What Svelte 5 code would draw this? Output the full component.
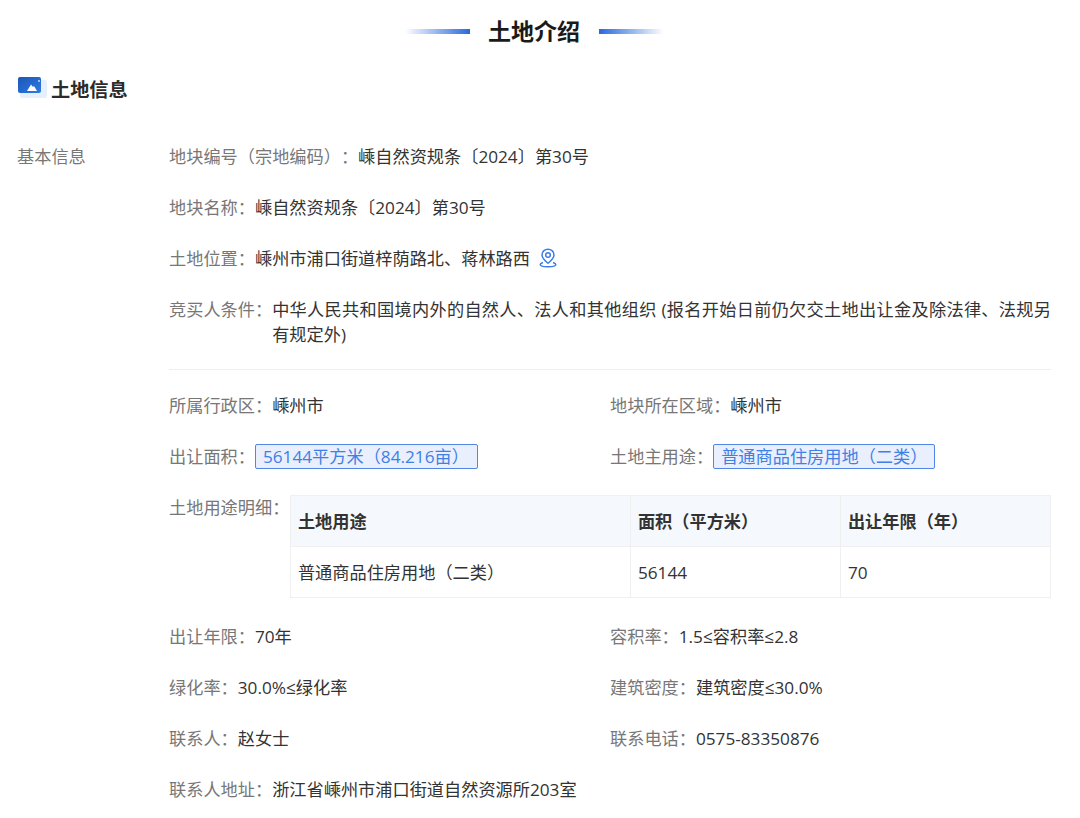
<script>
	const basics = [
		{ label: '地块编号（宗地编码）：', value: '嵊自然资规条〔2024〕第30号' },
		{ label: '地块名称：', value: '嵊自然资规条〔2024〕第30号' }
	];
	const uses = [{ name: '普通商品住房用地（二类）', area: '56144', years: '70' }];
	const footer = [
		['出让年限：', '70年', '容积率：', '1.5≤容积率≤2.8'],
		['绿化率：', '30.0%≤绿化率', '建筑密度：', '建筑密度≤30.0%'],
		['联系人：', '赵女士', '联系电话：', '0575-83350876']
	];
</script>

<div class="page">
	<header class="title">
		<span class="rule left"></span>
		<h1>土地介绍</h1>
		<span class="rule right"></span>
	</header>

	<h2 class="section">
		<svg class="section-icon" width="26" height="24" viewBox="0 0 26 24" aria-hidden="true">
			<defs>
				<linearGradient id="card" x1="0" y1="0" x2="1" y2="1">
					<stop offset="0" stop-color="#1b57b8" />
					<stop offset="1" stop-color="#2f7ae0" />
				</linearGradient>
			</defs>
			<rect x="2" y="3" width="27" height="18" rx="2" fill="#e6f0fd" />
			<rect x="0" y="0" width="23" height="16" rx="2" fill="url(#card)" />
			<path d="M9 14 L13 7.500 L15 10 L16 9 L19 14 Z" fill="#fff" />
			<circle cx="21" cy="4" r="1" fill="#bcd6fa" />
		</svg>
		<span>土地信息</span>
	</h2>

	<div class="group">
		<div class="group-name">基本信息</div>
		<div class="group-body">
			{#each basics as row}
				<div class="row"><span class="k">{row.label}</span><span class="v">{row.value}</span></div>
			{/each}
			<div class="row">
				<span class="k">土地位置：</span><span class="v">嵊州市浦口街道梓荫路北、蒋林路西</span>
				<svg class="pin" width="18" height="20" viewBox="0 0 18 20" fill="none" stroke="#3b7de8" stroke-width="1.5" aria-hidden="true">
					<path d="M9 1.200c-3.500 0-6 2.600-6 5.800 0 3.400 3 5.700 6 8.300 3-2.600 6-4.900 6-8.300 0-3.200-2.500-5.800-6-5.800z" />
					<circle cx="9" cy="7" r="2.300" />
					<path d="M4 14.500c-1.700.6-2.800 1.300-2.800 2 0 1.300 3.400 2.300 7.800 2.300s7.800-1 7.800-2.300c0-.7-1.100-1.400-2.800-2" />
				</svg>
			</div>
			<div class="row top">
				<span class="k">竞买人条件：</span>
				<span class="v wrap">中华人民共和国境内外的自然人、法人和其他组织 (报名开始日前仍欠交土地出让金及除法律、法规另有规定外)</span>
			</div>

			<div class="divider"></div>

			<div class="cols">
				<div class="row"><span class="k">所属行政区：</span><span class="v">嵊州市</span></div>
				<div class="row"><span class="k">地块所在区域：</span><span class="v">嵊州市</span></div>
			</div>
			<div class="cols">
				<div class="row"><span class="k">出让面积：</span><span class="tag wide">56144平方米（84.216亩）</span></div>
				<div class="row"><span class="k">土地主用途：</span><span class="tag">普通商品住房用地（二类）</span></div>
			</div>

			<div class="row top usage">
				<span class="k">土地用途明细：</span>
				<table>
					<thead>
						<tr><th class="c1">土地用途</th><th class="c2">面积（平方米）</th><th>出让年限（年）</th></tr>
					</thead>
					<tbody>
						{#each uses as use}
							<tr><td>{use.name}</td><td>{use.area}</td><td>{use.years}</td></tr>
						{/each}
					</tbody>
				</table>
			</div>

			{#each footer as f}
				<div class="cols">
					<div class="row"><span class="k">{f[0]}</span><span class="v">{f[1]}</span></div>
					<div class="row"><span class="k">{f[2]}</span><span class="v">{f[3]}</span></div>
				</div>
			{/each}
			<div class="row"><span class="k">联系人地址：</span><span class="v">浙江省嵊州市浦口街道自然资源所203室</span></div>
		</div>
	</div>
</div>

<style>
	:global(body) {
		background: #fff;
	}

	.page {
		width: 1080px;
		height: 818px;
		overflow: hidden;
		box-sizing: border-box;
		padding: 15px 29px 0 17px;
		font-family: 'Open Sans', 'Noto Sans CJK SC', sans-serif;
		font-size: 17.2px;
		line-height: 25px;
		color: #333;
		text-spacing-trim: space-all;
	}

	.title {
		display: flex;
		align-items: center;
		justify-content: center;
		gap: 18.500px;
		height: 32px;
	}

	.title h1 {
		margin: 0;
		font-size: 23px;
		line-height: 32px;
		font-weight: 700;
		color: #1a1a1a;
	}

	.rule {
		width: 65px;
		height: 5px;
	}

	.rule.left {
		background: linear-gradient(to right, rgba(43, 104, 220, 0), #2b68dc);
	}

	.rule.right {
		background: linear-gradient(to left, rgba(43, 104, 220, 0), #2b68dc);
	}

	.section {
		display: flex;
		align-items: center;
		gap: 7px;
		margin: 29px 0 0 1px;
		font-size: 19.2px;
		line-height: 28px;
		font-weight: 700;
		color: #2b2b2b;
	}

	.section-icon {
		overflow: visible;
		margin-top: -3px;
	}

	.group {
		display: flex;
		margin-top: 39.700px;
	}

	.group-name {
		width: 152px;
		flex: none;
		color: #777;
	}

	.group-body {
		flex: 1;
		min-width: 0;
	}

	.row {
		display: flex;
		align-items: center;
		margin-bottom: 26.250px;
	}

	.row.top {
		align-items: flex-start;
	}

	.k {
		flex: none;
		color: #777;
	}

	.v {
		color: #333;
	}

	.wrap {
		flex: 1;
		text-align: justify;
	}

	.pin {
		margin-left: 9px;
		margin-top: -2px;
	}

	.divider {
		height: 1px;
		background: #eee;
		margin: -4.700px 0 23px;
	}

	.cols {
		display: grid;
		grid-template-columns: 441px 1fr;
	}

	.tag {
		box-sizing: border-box;
		width: 222px;
		height: 25px;
		padding-left: 7px;
		border: 1px solid #4f86e8;
		border-radius: 2px;
		background: #e9effc;
		color: #3f7fe6;
		line-height: 23px;
		white-space: nowrap;
	}

	.tag.wide {
		width: 223px;
	}

	.usage {
		margin-top: -1px;
		margin-bottom: 26px;
	}

	.usage .k {
		margin-right: 0.600px;
	}

	table {
		flex: 1;
		border-collapse: collapse;
		table-layout: fixed;
	}

	th,
	td {
		height: 51px;
		padding: 2px 7px 0;
		box-sizing: border-box;
		border: 1px solid #f0f0f0;
		text-align: left;
		color: #333;
		font-weight: 400;
	}

	th {
		background: #f5f9fd;
		font-weight: 700;
	}

	.c1 {
		width: 340px;
	}

	.c2 {
		width: 210px;
	}
</style>
